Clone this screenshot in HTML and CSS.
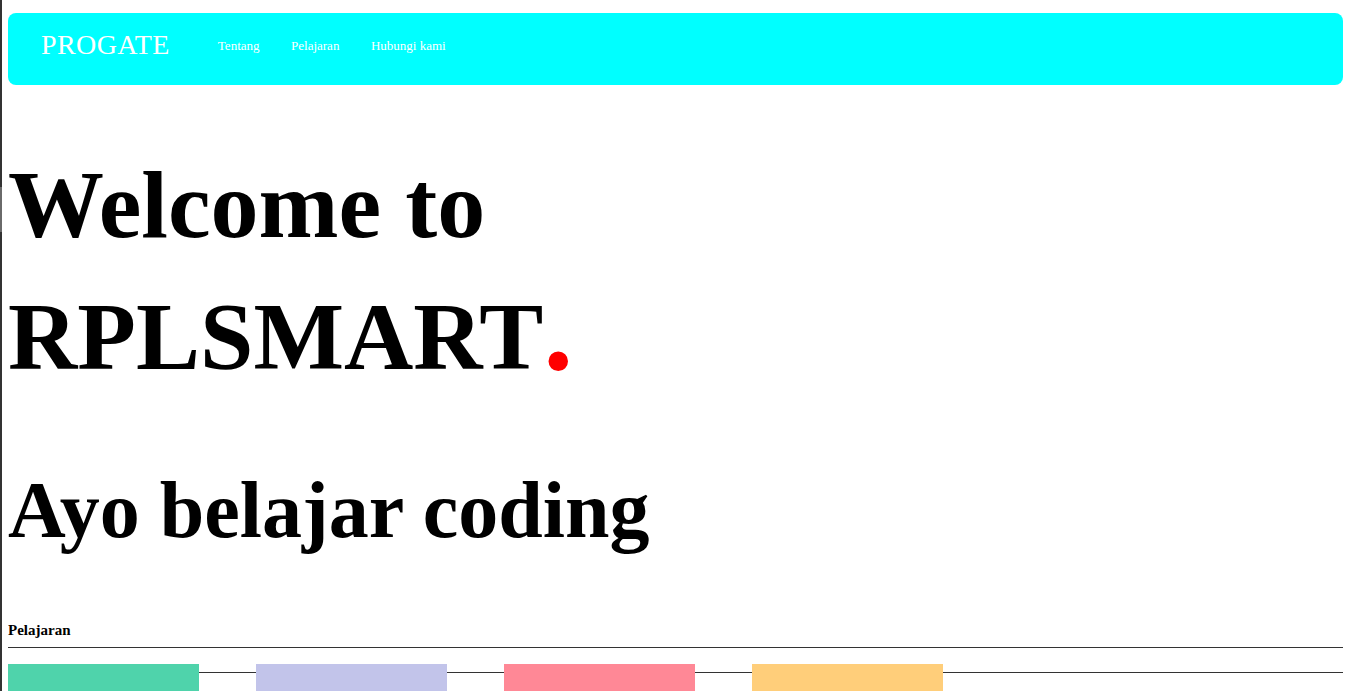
FILE: index.html
```html
<!DOCTYPE html>
<html lang="id">
<head>
<meta charset="utf-8">
<title>RPLSMART</title>
<link rel="stylesheet" href="styles.css">
</head>
<body>
  <div class="edge"></div>
  <header class="navbar">
    <div class="logo">PROGATE</div>
    <ul class="menu">
      <li>Tentang</li>
      <li>Pelajaran</li>
      <li>Hubungi kami</li>
    </ul>
  </header>
  <h1 class="hero-title">Welcome to<br>RPLSMART<span class="dot">.</span></h1>
  <h2 class="hero-sub">Ayo belajar coding</h2>
  <h4 class="section-title">Pelajaran</h4>
  <hr class="divider">
  <div class="cards">
    <div class="card card-green"></div>
    <div class="card card-lavender"></div>
    <div class="card card-pink"></div>
    <div class="card card-yellow"></div>
  </div>
</body>
</html>
```
FILE: styles.css
```css
html {
  background: #fff;
}
body {
  margin: 13px 4px 8px 8px;
  font-family: "Liberation Serif", "Times New Roman", serif;
  color: #000;
}
.edge {
  position: fixed;
  left: 0;
  top: 0;
  width: 2px;
  height: 100%;
  background: linear-gradient(#333 0, #333 187px, #6a6a6a 187px, #6a6a6a 232px, #333 232px);
}
.navbar {
  display: flex;
  align-items: center;
  height: 72px;
  box-sizing: border-box;
  padding: 0 0 8px 33px;
  background: #00ffff;
  border-radius: 8px;
  color: #fff;
}
.logo {
  font-size: 28px;
  letter-spacing: 0.4px;
}
.menu {
  display: flex;
  gap: 31.5px;
  list-style: none;
  margin: 0 0 0 48px;
  padding: 2px 0 0 0;
  font-size: 13px;
}
.hero-title {
  font-size: 96px;
  font-weight: bold;
  margin: 0.67em 0;
}
.dot {
  font-size: 120px;
  color: #ff0000;
}
.hero-sub {
  font-size: 80px;
  font-weight: bold;
  margin: 0.83em 0;
}
.section-title {
  font-size: 15px;
  font-weight: bold;
  margin: 0;
}
.divider {
  border: 0;
  border-top: 1px solid #333;
  margin: 8px 0 16px;
}
.cards {
  display: flex;
  gap: 57px;
  background: linear-gradient(#333, #333) 0 8px / 100% 1px no-repeat;
}
.card {
  width: 191px;
  height: 150px;
}
.card-green { background: #4fd3ab; }
.card-lavender { background: #c2c4ea; }
.card-pink { background: #ff8896; }
.card-yellow { background: #ffce7a; }
```
